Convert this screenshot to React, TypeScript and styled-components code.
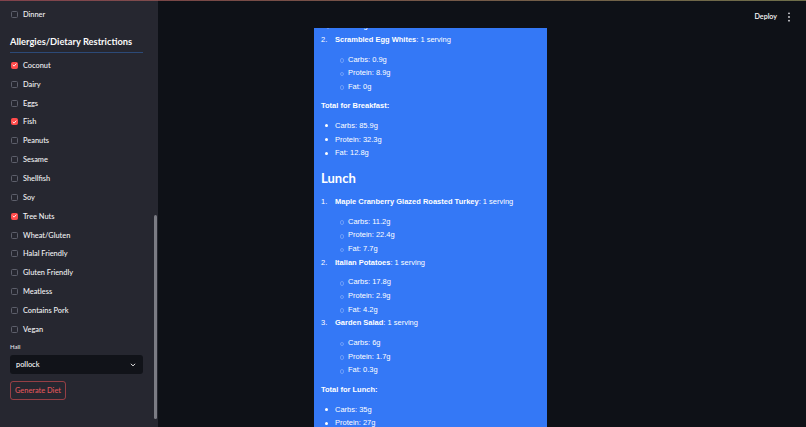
import React from "react";
import styled, { createGlobalStyle } from "styled-components";

const Global = createGlobalStyle`
  html, body { margin: 0; padding: 0; width: 806px; height: 427px; overflow: hidden; background: #0e1117; }
  #root { width: 806px; height: 427px; }
  * { box-sizing: border-box; }
`;

const Shell = styled.div`
  position: relative;
  width: 806px;
  height: 427px;
  display: flex;
  background: #0e1117;
  overflow: hidden;
`;

const Decoration = styled.div`
  position: absolute;
  left: 0;
  top: 0;
  right: 0;
  height: 1px;
  background: linear-gradient(90deg, rgba(160, 75, 85, 0.75), rgba(150, 150, 95, 0.7));
  z-index: 5;
`;

const Sidebar = styled.aside`
  position: relative;
  width: 158px;
  flex: none;
  height: 100%;
  background: #262730;
  padding: 4.6px 15px 0 10px;
  display: flex;
  flex-direction: column;
  font-family: Lato, "Noto Sans", sans-serif;
  color: #fafafa;
  overflow: hidden;
`;

const Scrollbar = styled.div`
  position: absolute;
  left: 154px;
  top: 215px;
  width: 2.5px;
  height: 204px;
  border-radius: 2px;
  background: #7b7c84;
`;

const CheckRow = styled.label`
  height: 18.86px;
  display: flex;
  align-items: center;
  gap: 5px;
  padding-left: 1px;
  font-size: 7.4px;
  font-weight: 500;
  color: #f4f4f6;
`;

const Box = styled.span<{ $on?: boolean }>`
  width: 7px;
  height: 7px;
  border-radius: 1.5px;
  flex: none;
  display: flex;
  align-items: center;
  justify-content: center;
  background: ${(p) => (p.$on ? "#ff4b4b" : "transparent")};
  border: 1px solid ${(p) => (p.$on ? "#ff4b4b" : "#5d5f6b")};
`;

const SectionTitle = styled.div`
  margin-top: 12.5px;
  font-size: 9.3px;
  font-weight: 700;
  line-height: 12px;
  color: #fafafa;
  padding-bottom: 4px;
  border-bottom: 1.5px solid #2c4a78;
  margin-bottom: 3px;
`;

const FieldLabel = styled.div`
  margin-top: 4.5px;
  font-size: 6px;
  line-height: 8px;
  font-weight: 500;
  color: #e8e8ea;
`;

const Select = styled.div`
  margin-top: 4px;
  height: 19px;
  border-radius: 3px;
  background: #111319;
  display: flex;
  align-items: center;
  justify-content: space-between;
  padding: 0 7px 0 6px;
  font-size: 7.4px;
  font-weight: 500;
  color: #fafafa;
`;

const GhostButton = styled.button`
  margin-top: 7px;
  align-self: flex-start;
  height: 19px;
  padding: 0 4px;
  border-radius: 3px;
  border: 1px solid rgba(224, 80, 84, 0.6);
  background: transparent;
  color: #e0575b;
  font-family: Lato, "Noto Sans", sans-serif;
  font-size: 7.4px;
  font-weight: 500;
`;

const Main = styled.main`
  flex: 1;
  height: 100%;
  display: flex;
  flex-direction: column;
  overflow: hidden;
`;

const Header = styled.header`
  height: 28px;
  flex: none;
  display: flex;
  align-items: center;
  justify-content: flex-end;
  gap: 10px;
  padding: 5px 15px 0 0;
  background: #0e1117;
  font-family: Lato, "Noto Sans", sans-serif;
  font-size: 7.1px;
  font-weight: 600;
  color: #fafafa;
  position: relative;
  z-index: 2;
`;

const Stage = styled.div`
  flex: 1;
  overflow: hidden;
  display: flex;
  justify-content: flex-start;
  padding-left: 156px;
`;

const Card = styled.section`
  width: 233px;
  height: 100%;
  background: #3478f6;
  padding: 0 7px;
  color: #ffffff;
  font-family: "Liberation Sans", Arial, sans-serif;
  font-size: 7.5px;
  line-height: 13.65px;
  overflow: hidden;
`;

const NumList = styled.ol<{ $start?: number }>`
  margin: 0;
  padding: 0;
  list-style: none;
  counter-reset: item ${(p) => (p.$start ?? 1) - 1};
`;

const NumItem = styled.li`
  counter-increment: item;
  position: relative;
  padding-left: 14px;
  &::before {
    content: counter(item) ".";
    position: absolute;
    left: 0;
  }
`;

const SubList = styled.ul<{ $top?: number }>`
  margin: ${(p) => p.$top ?? 6}px 0 0 0;
  padding: 0 0 0 13px;
  list-style: none;
`;

const SubItem = styled.li`
  position: relative;
  &::before {
    content: "";
    position: absolute;
    left: -8.5px;
    top: 5.6px;
    width: 2.6px;
    height: 2.6px;
    border-radius: 50%;
    border: 0.6px solid rgba(170, 200, 255, 0.45);
  }
`;

const DiscList = styled.ul`
  margin: 6px 0 0 0;
  padding: 0 0 0 14px;
  list-style: none;
`;

const DiscItem = styled.li`
  position: relative;
  &::before {
    content: "";
    position: absolute;
    left: -10px;
    top: 5.3px;
    width: 3px;
    height: 3px;
    border-radius: 50%;
    background: #ffffff;
  }
`;

const Para = styled.p`
  margin: 6px 0 0 0;
  font-weight: 700;
`;

const Heading = styled.h3`
  margin: 9px 0 8px 0;
  font-family: Lato, "Noto Sans", sans-serif;
  font-size: 13px;
  font-weight: 700;
  line-height: 18px;
`;

const Check = () => (
  <svg width="6" height="6" viewBox="0 0 10 10">
    <polyline points="2,5.2 4.2,7.3 8.2,2.8" fill="none" stroke="#fff" strokeWidth="1.8" strokeLinecap="round" strokeLinejoin="round" />
  </svg>
);

const Chevron = () => (
  <svg width="6" height="6" viewBox="0 0 10 10">
    <polyline points="2,3.5 5,6.5 8,3.5" fill="none" stroke="#fafafa" strokeWidth="1.6" strokeLinecap="round" strokeLinejoin="round" />
  </svg>
);

const Kebab = () => (
  <svg width="4" height="10" viewBox="0 0 4 10">
    <circle cx="2" cy="1.3" r="0.9" fill="#d8d8dc" />
    <circle cx="2" cy="5" r="0.9" fill="#d8d8dc" />
    <circle cx="2" cy="8.7" r="0.9" fill="#d8d8dc" />
  </svg>
);

const restrictions: [string, boolean][] = [
  ["Coconut", true],
  ["Dairy", false],
  ["Eggs", false],
  ["Fish", true],
  ["Peanuts", false],
  ["Sesame", false],
  ["Shellfish", false],
  ["Soy", false],
  ["Tree Nuts", true],
  ["Wheat/Gluten", false],
  ["Halal Friendly", false],
  ["Gluten Friendly", false],
  ["Meatless", false],
  ["Contains Pork", false],
  ["Vegan", false],
];

const Macro = ({ c, p, f }: { c: string; p: string; f: string }) => (
  <SubList>
    <SubItem>Carbs: {c}</SubItem>
    <SubItem>Protein: {p}</SubItem>
    <SubItem>Fat: {f}</SubItem>
  </SubList>
);

export default function App() {
  return (
    <Shell>
      <Global />
      <Decoration />
      <Sidebar>
        <CheckRow>
          <Box />
          Dinner
        </CheckRow>
        <SectionTitle>Allergies/Dietary Restrictions</SectionTitle>
        {restrictions.map(([name, on]) => (
          <CheckRow key={name}>
            <Box $on={on}>{on && <Check />}</Box>
            {name}
          </CheckRow>
        ))}
        <FieldLabel>Hall</FieldLabel>
        <Select>
          pollock
          <Chevron />
        </Select>
        <GhostButton>Generate Diet</GhostButton>
        <Scrollbar />
      </Sidebar>
      <Main>
        <Header>
          <span>Deploy</span>
          <Kebab />
        </Header>
        <Stage>
          <Card>
            <SubList $top={-8.8}>
              <SubItem>Fat: 12.8g</SubItem>
            </SubList>
            <NumList $start={2}>
              <NumItem>
                <b>Scrambled Egg Whites</b>: 1 serving
                <Macro c="0.9g" p="8.9g" f="0g" />
              </NumItem>
            </NumList>
            <Para>Total for Breakfast:</Para>
            <DiscList>
              <DiscItem>Carbs: 85.9g</DiscItem>
              <DiscItem>Protein: 32.3g</DiscItem>
              <DiscItem>Fat: 12.8g</DiscItem>
            </DiscList>
            <Heading>Lunch</Heading>
            <NumList>
              <NumItem>
                <b>Maple Cranberry Glazed Roasted Turkey</b>: 1 serving
                <Macro c="11.2g" p="22.4g" f="7.7g" />
              </NumItem>
              <NumItem>
                <b>Italian Potatoes</b>: 1 serving
                <Macro c="17.8g" p="2.9g" f="4.2g" />
              </NumItem>
              <NumItem>
                <b>Garden Salad</b>: 1 serving
                <Macro c="6g" p="1.7g" f="0.3g" />
              </NumItem>
            </NumList>
            <Para>Total for Lunch:</Para>
            <DiscList>
              <DiscItem>Carbs: 35g</DiscItem>
              <DiscItem>Protein: 27g</DiscItem>
              <DiscItem>Fat: 7.7g</DiscItem>
            </DiscList>
          </Card>
        </Stage>
      </Main>
    </Shell>
  );
}
